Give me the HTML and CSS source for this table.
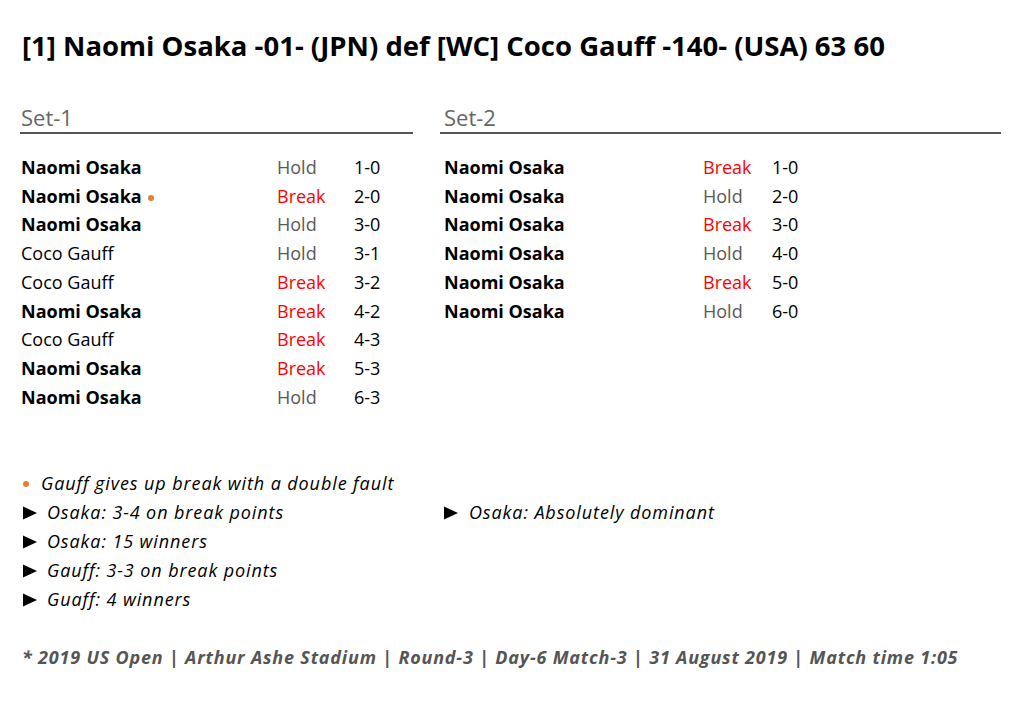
FILE: index.html
```html
<!DOCTYPE html>
<html lang="en">
<head>
<meta charset="utf-8">
<title>Osaka def Gauff</title>
<link rel="stylesheet" href="styles.css">
</head>
<body>
<main class="page">
  <h1 class="title">[1] Naomi Osaka -01- (JPN) def [WC] Coco Gauff -140- (USA) 63 60</h1>

  <section class="sets">
    <div class="set set-1">
      <h2 class="set-label">Set-1</h2>
      <div class="games">
        <div class="game"><span class="player win">Naomi Osaka</span><span class="kind hold">Hold</span><span class="score">1-0</span></div>
        <div class="game"><span class="player win">Naomi Osaka <span class="dot"></span></span><span class="kind break">Break</span><span class="score">2-0</span></div>
        <div class="game"><span class="player win">Naomi Osaka</span><span class="kind hold">Hold</span><span class="score">3-0</span></div>
        <div class="game"><span class="player">Coco Gauff</span><span class="kind hold">Hold</span><span class="score">3-1</span></div>
        <div class="game"><span class="player">Coco Gauff</span><span class="kind break">Break</span><span class="score">3-2</span></div>
        <div class="game"><span class="player win">Naomi Osaka</span><span class="kind break">Break</span><span class="score">4-2</span></div>
        <div class="game"><span class="player">Coco Gauff</span><span class="kind break">Break</span><span class="score">4-3</span></div>
        <div class="game"><span class="player win">Naomi Osaka</span><span class="kind break">Break</span><span class="score">5-3</span></div>
        <div class="game"><span class="player win">Naomi Osaka</span><span class="kind hold">Hold</span><span class="score">6-3</span></div>
      </div>
    </div>
    <div class="set set-2">
      <h2 class="set-label">Set-2</h2>
      <div class="games">
        <div class="game"><span class="player win">Naomi Osaka</span><span class="kind break">Break</span><span class="score">1-0</span></div>
        <div class="game"><span class="player win">Naomi Osaka</span><span class="kind hold">Hold</span><span class="score">2-0</span></div>
        <div class="game"><span class="player win">Naomi Osaka</span><span class="kind break">Break</span><span class="score">3-0</span></div>
        <div class="game"><span class="player win">Naomi Osaka</span><span class="kind hold">Hold</span><span class="score">4-0</span></div>
        <div class="game"><span class="player win">Naomi Osaka</span><span class="kind break">Break</span><span class="score">5-0</span></div>
        <div class="game"><span class="player win">Naomi Osaka</span><span class="kind hold">Hold</span><span class="score">6-0</span></div>
      </div>
    </div>
  </section>

  <section class="notes">
    <ul class="note-list">
      <li class="note"><span class="mark mark-dot"><span class="dot"></span></span>Gauff gives up break with a double fault</li>
      <li class="note"><span class="mark"><svg class="tri" width="14" height="14" viewBox="0 0 14 14"><polygon points="0,0.5 14,7 0,13.5"/></svg></span>Osaka: 3-4 on break points</li>
      <li class="note"><span class="mark"><svg class="tri" width="14" height="14" viewBox="0 0 14 14"><polygon points="0,0.5 14,7 0,13.5"/></svg></span>Osaka: 15 winners</li>
      <li class="note"><span class="mark"><svg class="tri" width="14" height="14" viewBox="0 0 14 14"><polygon points="0,0.5 14,7 0,13.5"/></svg></span>Gauff: 3-3 on break points</li>
      <li class="note"><span class="mark"><svg class="tri" width="14" height="14" viewBox="0 0 14 14"><polygon points="0,0.5 14,7 0,13.5"/></svg></span>Guaff: 4 winners</li>
    </ul>
    <ul class="note-list note-list-right">
      <li class="note"><span class="mark"><svg class="tri" width="14" height="14" viewBox="0 0 14 14"><polygon points="0,0.5 14,7 0,13.5"/></svg></span>Osaka: Absolutely dominant</li>
    </ul>
  </section>

  <p class="footer">* 2019 US Open | Arthur Ashe Stadium | Round-3 | Day-6 Match-3 | 31 August 2019 | Match time 1:05</p>
</main>
</body>
</html>
```
FILE: styles.css
```css
html, body {
  margin: 0;
  padding: 0;
  background: #ffffff;
}
body {
  font-family: "Open Sans", Lato, "Liberation Sans", sans-serif;
  color: #000;
}
.page {
  padding: 28px 0 0 22px;
  width: 1002px;
  box-sizing: border-box;
}
.title {
  margin: 0;
  font-size: 27.5px;
  font-weight: 700;
  line-height: 36px;
  color: #000;
}
.sets {
  display: grid;
  grid-template-columns: 393px 561px;
  column-gap: 27px;
  margin-top: 38px;
  margin-left: -2px;
}
.set-label {
  margin: 0;
  font-size: 22px;
  font-weight: 400;
  color: #666;
  line-height: 30px;
  padding-left: 1px;
  border-bottom: 2px solid #555;
  padding-bottom: 0;
}
.set-2 .set-label {
  padding-left: 4px;
}
.games {
  margin-top: 19px;
}
.game {
  display: grid;
  grid-template-columns: 256px 77px auto;
  font-size: 18px;
  line-height: 28.7px;
  padding-left: 1px;
}
.set-2 .game {
  grid-template-columns: 259px 69px auto;
  padding-left: 4px;
}
.player {
  font-weight: 400;
  color: #000;
}
.player.win {
  font-weight: 700;
}
.kind.hold { color: #595959; }
.kind.break { color: #ff0000; }
.score { color: #000; }
.dot {
  display: inline-block;
  width: 6px;
  height: 6px;
  border-radius: 50%;
  background: #ed7d31;
  vertical-align: middle;
  margin-left: 2px;
}
.notes {
  display: grid;
  grid-template-columns: 420px 400px;
  margin-top: 58px;
}
.note-list {
  list-style: none;
  margin: 0;
  padding: 0;
}
.note-list-right {
  padding-top: 29px;
  padding-left: 1px;
}
.note {
  font-style: italic;
  font-size: 18px;
  letter-spacing: 0.9px;
  line-height: 29px;
  display: flex;
  align-items: center;
}
.mark {
  display: inline-flex;
  width: 25px;
  align-items: center;
  flex: none;
}
.mark .dot {
  margin-left: 1px;
}
.mark-dot { width: 19px; }
.tri {
  display: block;
  fill: #000;
  margin-left: 1px;
}
.note-list-right .mark { width: 26px; }
.footer {
  margin: 29px 0 0;
  font-size: 18px;
  letter-spacing: 0.8px;
  font-style: italic;
  font-weight: 700;
  color: #555;
  line-height: 28px;
}
```
